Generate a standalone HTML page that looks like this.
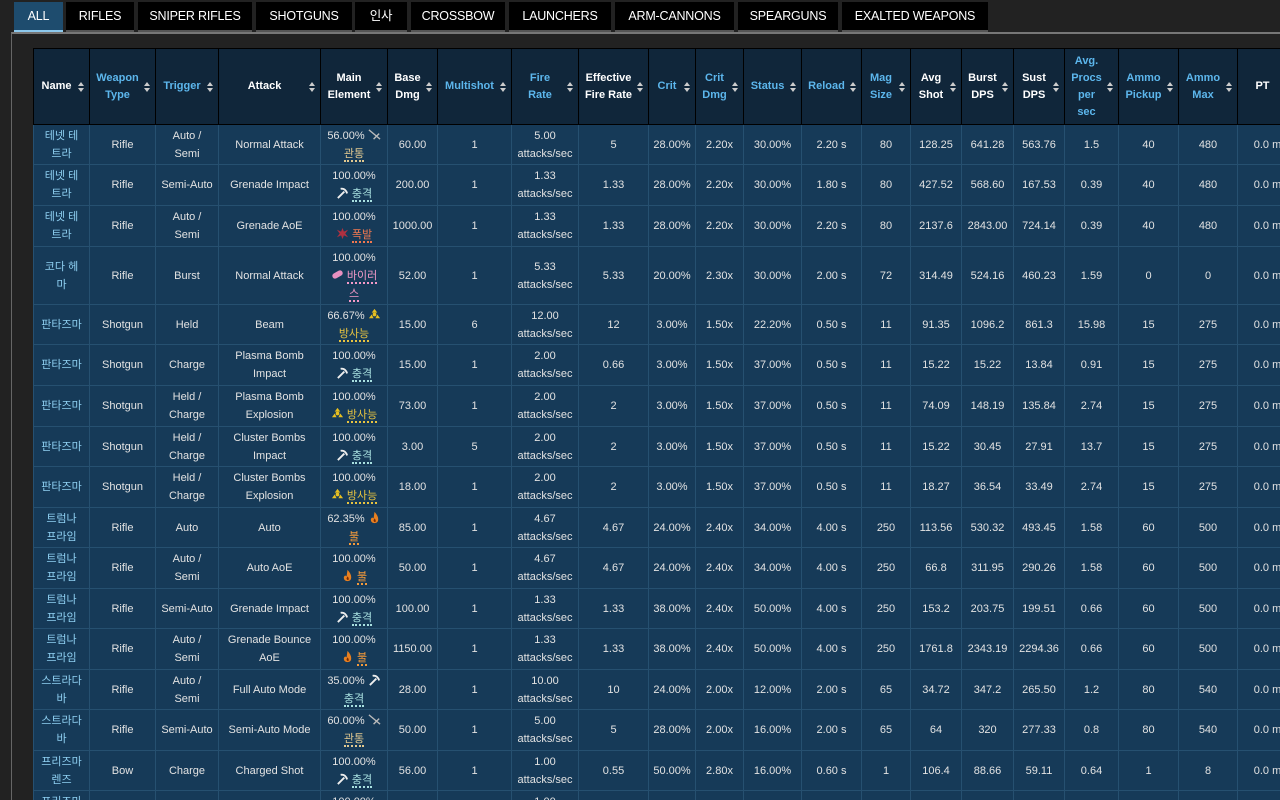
<!DOCTYPE html>
<html><head><meta charset="utf-8">
<style>
html,body{margin:0;padding:0;background:#222;width:1280px;height:800px;overflow:hidden;font-family:"Liberation Sans","Noto Sans CJK KR",sans-serif;}
#wrap{position:relative;width:1280px;height:800px;overflow:hidden;background:#222}
.tab{position:absolute;top:2px;background:#000;color:#fff;font-size:12.5px;height:28px;line-height:28px;text-align:center;border-bottom:2px solid #555;white-space:nowrap;letter-spacing:-0.2px}
.tab.act{background:#1e4c6e;border-bottom:2px solid #8cc8ec}
.panel{position:absolute;top:32px;left:11px;width:1290px;height:800px;border-top:2px solid #777;border-left:1px solid #666;background:#222}
table{position:absolute;top:48px;left:33px;width:1264px;border-collapse:collapse;table-layout:fixed;font-size:11px;}
th{background:#10263a;color:#fff;font-weight:bold;border:1px solid #000;height:75px;padding:0 14px 0 4px;position:relative;line-height:17px;text-align:center}
th.b{color:#5cb6ec}
th svg{position:absolute;right:4px;top:32px}
td{background:#163a58;color:#e2e2e2;border:1px solid #265070;text-align:center;line-height:18px;padding:0 2px;white-space:nowrap;overflow:hidden}
td.n{color:#8fd0f2}
.e{border-bottom:2px dotted;padding-bottom:0}
.imp{color:#a8e0e0}.pun{color:#e0c890}.bla{color:#f07850}.vir{color:#f49ac8}.rad{color:#e8c440}.hea{color:#f59a3a}
i svg{vertical-align:-2px}
i{font-style:normal}
</style></head><body><div id="wrap">
<div class="panel"></div>
<div class="tab act" style="left:14px;width:49px">ALL</div>
<div class="tab" style="left:66px;width:68px">RIFLES</div>
<div class="tab" style="left:138px;width:114px">SNIPER RIFLES</div>
<div class="tab" style="left:256px;width:96px">SHOTGUNS</div>
<div class="tab" style="left:355px;width:52px">인사</div>
<div class="tab" style="left:411px;width:94px">CROSSBOW</div>
<div class="tab" style="left:509px;width:102px">LAUNCHERS</div>
<div class="tab" style="left:615px;width:119px">ARM-CANNONS</div>
<div class="tab" style="left:738px;width:100px">SPEARGUNS</div>
<div class="tab" style="left:842px;width:146px">EXALTED WEAPONS</div>
<svg width="0" height="0" style="position:absolute">
<defs>
<symbol id="s" viewBox="0 0 8 12"><path d="M4 1L7 5H1Z M4 11L7 7H1Z" fill="#ccc"/></symbol>
<symbol id="imp" viewBox="0 0 14 14"><path d="M2 13L9 6 M5 3Q10 2 12 8" stroke="#eee" stroke-width="2" fill="none"/></symbol>
<symbol id="pun" viewBox="0 0 14 14"><path d="M1 2L13 12 M6 12L12 6" stroke="#bbb" stroke-width="1.5" fill="none"/></symbol>
<symbol id="bla" viewBox="0 0 14 14"><path d="M7 1L8.5 5 13 3 10 7 13 11 8.5 9 7 13 5.5 9 1 11 4 7 1 3 5.5 5Z" fill="#b03040"/></symbol>
<symbol id="vir" viewBox="0 0 14 14"><rect x="1" y="4" width="12" height="6" rx="3" transform="rotate(-30 7 7)" fill="#e890c0"/></symbol>
<symbol id="rad" viewBox="0 0 14 14"><circle cx="7" cy="7" r="2" fill="#e8c020"/><path d="M7 1L10 5H4Z M1 11L4 7 6 11Z M13 11L10 7 8 11Z" fill="#e8c020"/></symbol>
<symbol id="hea" viewBox="0 0 14 14"><path d="M7 1Q11 5 11 9 Q11 13 7 13 Q3 13 3 9 Q4 6 6 8Z" fill="#e88020"/><path d="M7 8Q9 10 8 12 Q6 12 6 10Z" fill="#7a2a00"/></symbol>
</defs></svg>
<table>
<colgroup><col style="width:56px"><col style="width:66px"><col style="width:63px"><col style="width:102px"><col style="width:67px"><col style="width:50px"><col style="width:74px"><col style="width:67px"><col style="width:70px"><col style="width:47px"><col style="width:48px"><col style="width:58px"><col style="width:60px"><col style="width:49px"><col style="width:51px"><col style="width:52px"><col style="width:51px"><col style="width:54px"><col style="width:60px"><col style="width:59px"><col style="width:60px"></colgroup>
<tr>
<th>Name<svg width="8" height="12"><use href="#s"/></svg></th>
<th class="b">Weapon Type<svg width="8" height="12"><use href="#s"/></svg></th>
<th class="b">Trigger<svg width="8" height="12"><use href="#s"/></svg></th>
<th>Attack<svg width="8" height="12"><use href="#s"/></svg></th>
<th>Main Element<svg width="8" height="12"><use href="#s"/></svg></th>
<th>Base Dmg<svg width="8" height="12"><use href="#s"/></svg></th>
<th class="b">Multishot<svg width="8" height="12"><use href="#s"/></svg></th>
<th class="b">Fire<br>Rate<svg width="8" height="12"><use href="#s"/></svg></th>
<th>Effective Fire Rate<svg width="8" height="12"><use href="#s"/></svg></th>
<th class="b">Crit<svg width="8" height="12"><use href="#s"/></svg></th>
<th class="b">Crit Dmg<svg width="8" height="12"><use href="#s"/></svg></th>
<th class="b">Status<svg width="8" height="12"><use href="#s"/></svg></th>
<th class="b">Reload<svg width="8" height="12"><use href="#s"/></svg></th>
<th class="b">Mag Size<svg width="8" height="12"><use href="#s"/></svg></th>
<th>Avg Shot<svg width="8" height="12"><use href="#s"/></svg></th>
<th>Burst DPS<svg width="8" height="12"><use href="#s"/></svg></th>
<th>Sust DPS<svg width="8" height="12"><use href="#s"/></svg></th>
<th class="b">Avg. Procs per sec<svg width="8" height="12"><use href="#s"/></svg></th>
<th class="b">Ammo Pickup<svg width="8" height="12"><use href="#s"/></svg></th>
<th class="b">Ammo Max<svg width="8" height="12"><use href="#s"/></svg></th>
<th>PT<svg width="8" height="12"><use href="#s"/></svg></th>
</tr>
<tr style="height:40px"><td class="n">테넷 테<br>트라</td><td>Rifle</td><td>Auto /<br>Semi</td><td>Normal Attack</td><td>56.00% <i><svg width="13" height="13"><use href="#pun"/></svg></i><br><span class="e pun">관통</span></td><td>60.00</td><td>1</td><td>5.00<br>attacks/sec</td><td>5</td><td>28.00%</td><td>2.20x</td><td>30.00%</td><td>2.20 s</td><td>80</td><td>128.25</td><td>641.28</td><td>563.76</td><td>1.5</td><td>40</td><td>480</td><td>0.0 m</td></tr>
<tr style="height:41px"><td class="n">테넷 테<br>트라</td><td>Rifle</td><td>Semi-Auto</td><td>Grenade Impact</td><td>100.00%<br><i><svg width="13" height="13"><use href="#imp"/></svg></i> <span class="e imp">충격</span></td><td>200.00</td><td>1</td><td>1.33<br>attacks/sec</td><td>1.33</td><td>28.00%</td><td>2.20x</td><td>30.00%</td><td>1.80 s</td><td>80</td><td>427.52</td><td>568.60</td><td>167.53</td><td>0.39</td><td>40</td><td>480</td><td>0.0 m</td></tr>
<tr style="height:41px"><td class="n">테넷 테<br>트라</td><td>Rifle</td><td>Auto /<br>Semi</td><td>Grenade AoE</td><td>100.00%<br><i><svg width="13" height="13"><use href="#bla"/></svg></i> <span class="e bla">폭발</span></td><td>1000.00</td><td>1</td><td>1.33<br>attacks/sec</td><td>1.33</td><td>28.00%</td><td>2.20x</td><td>30.00%</td><td>2.20 s</td><td>80</td><td>2137.6</td><td>2843.00</td><td>724.14</td><td>0.39</td><td>40</td><td>480</td><td>0.0 m</td></tr>
<tr style="height:58px"><td class="n">코다 헤<br>마</td><td>Rifle</td><td>Burst</td><td>Normal Attack</td><td>100.00%<br><i><svg width="13" height="13"><use href="#vir"/></svg></i> <span class="e vir">바이러</span><br><span class="e vir">스</span></td><td>52.00</td><td>1</td><td>5.33<br>attacks/sec</td><td>5.33</td><td>20.00%</td><td>2.30x</td><td>30.00%</td><td>2.00 s</td><td>72</td><td>314.49</td><td>524.16</td><td>460.23</td><td>1.59</td><td>0</td><td>0</td><td>0.0 m</td></tr>
<tr style="height:40px"><td class="n">판타즈마</td><td>Shotgun</td><td>Held</td><td>Beam</td><td>66.67% <i><svg width="13" height="13"><use href="#rad"/></svg></i><br><span class="e rad">방사능</span></td><td>15.00</td><td>6</td><td>12.00<br>attacks/sec</td><td>12</td><td>3.00%</td><td>1.50x</td><td>22.20%</td><td>0.50 s</td><td>11</td><td>91.35</td><td>1096.2</td><td>861.3</td><td>15.98</td><td>15</td><td>275</td><td>0.0 m</td></tr>
<tr style="height:41px"><td class="n">판타즈마</td><td>Shotgun</td><td>Charge</td><td>Plasma Bomb<br>Impact</td><td>100.00%<br><i><svg width="13" height="13"><use href="#imp"/></svg></i> <span class="e imp">충격</span></td><td>15.00</td><td>1</td><td>2.00<br>attacks/sec</td><td>0.66</td><td>3.00%</td><td>1.50x</td><td>37.00%</td><td>0.50 s</td><td>11</td><td>15.22</td><td>15.22</td><td>13.84</td><td>0.91</td><td>15</td><td>275</td><td>0.0 m</td></tr>
<tr style="height:41px"><td class="n">판타즈마</td><td>Shotgun</td><td>Held /<br>Charge</td><td>Plasma Bomb<br>Explosion</td><td>100.00%<br><i><svg width="13" height="13"><use href="#rad"/></svg></i> <span class="e rad">방사능</span></td><td>73.00</td><td>1</td><td>2.00<br>attacks/sec</td><td>2</td><td>3.00%</td><td>1.50x</td><td>37.00%</td><td>0.50 s</td><td>11</td><td>74.09</td><td>148.19</td><td>135.84</td><td>2.74</td><td>15</td><td>275</td><td>0.0 m</td></tr>
<tr style="height:40px"><td class="n">판타즈마</td><td>Shotgun</td><td>Held /<br>Charge</td><td>Cluster Bombs<br>Impact</td><td>100.00%<br><i><svg width="13" height="13"><use href="#imp"/></svg></i> <span class="e imp">충격</span></td><td>3.00</td><td>5</td><td>2.00<br>attacks/sec</td><td>2</td><td>3.00%</td><td>1.50x</td><td>37.00%</td><td>0.50 s</td><td>11</td><td>15.22</td><td>30.45</td><td>27.91</td><td>13.7</td><td>15</td><td>275</td><td>0.0 m</td></tr>
<tr style="height:41px"><td class="n">판타즈마</td><td>Shotgun</td><td>Held /<br>Charge</td><td>Cluster Bombs<br>Explosion</td><td>100.00%<br><i><svg width="13" height="13"><use href="#rad"/></svg></i> <span class="e rad">방사능</span></td><td>18.00</td><td>1</td><td>2.00<br>attacks/sec</td><td>2</td><td>3.00%</td><td>1.50x</td><td>37.00%</td><td>0.50 s</td><td>11</td><td>18.27</td><td>36.54</td><td>33.49</td><td>2.74</td><td>15</td><td>275</td><td>0.0 m</td></tr>
<tr style="height:40px"><td class="n">트럼나<br>프라임</td><td>Rifle</td><td>Auto</td><td>Auto</td><td>62.35% <i><svg width="13" height="13"><use href="#hea"/></svg></i><br><span class="e hea">불</span></td><td>85.00</td><td>1</td><td>4.67<br>attacks/sec</td><td>4.67</td><td>24.00%</td><td>2.40x</td><td>34.00%</td><td>4.00 s</td><td>250</td><td>113.56</td><td>530.32</td><td>493.45</td><td>1.58</td><td>60</td><td>500</td><td>0.0 m</td></tr>
<tr style="height:41px"><td class="n">트럼나<br>프라임</td><td>Rifle</td><td>Auto /<br>Semi</td><td>Auto AoE</td><td>100.00%<br><i><svg width="13" height="13"><use href="#hea"/></svg></i> <span class="e hea">불</span></td><td>50.00</td><td>1</td><td>4.67<br>attacks/sec</td><td>4.67</td><td>24.00%</td><td>2.40x</td><td>34.00%</td><td>4.00 s</td><td>250</td><td>66.8</td><td>311.95</td><td>290.26</td><td>1.58</td><td>60</td><td>500</td><td>0.0 m</td></tr>
<tr style="height:40px"><td class="n">트럼나<br>프라임</td><td>Rifle</td><td>Semi-Auto</td><td>Grenade Impact</td><td>100.00%<br><i><svg width="13" height="13"><use href="#imp"/></svg></i> <span class="e imp">충격</span></td><td>100.00</td><td>1</td><td>1.33<br>attacks/sec</td><td>1.33</td><td>38.00%</td><td>2.40x</td><td>50.00%</td><td>4.00 s</td><td>250</td><td>153.2</td><td>203.75</td><td>199.51</td><td>0.66</td><td>60</td><td>500</td><td>0.0 m</td></tr>
<tr style="height:41px"><td class="n">트럼나<br>프라임</td><td>Rifle</td><td>Auto /<br>Semi</td><td>Grenade Bounce<br>AoE</td><td>100.00%<br><i><svg width="13" height="13"><use href="#hea"/></svg></i> <span class="e hea">불</span></td><td>1150.00</td><td>1</td><td>1.33<br>attacks/sec</td><td>1.33</td><td>38.00%</td><td>2.40x</td><td>50.00%</td><td>4.00 s</td><td>250</td><td>1761.8</td><td>2343.19</td><td>2294.36</td><td>0.66</td><td>60</td><td>500</td><td>0.0 m</td></tr>
<tr style="height:40px"><td class="n">스트라다<br>바</td><td>Rifle</td><td>Auto /<br>Semi</td><td>Full Auto Mode</td><td>35.00% <i><svg width="13" height="13"><use href="#imp"/></svg></i><br><span class="e imp">충격</span></td><td>28.00</td><td>1</td><td>10.00<br>attacks/sec</td><td>10</td><td>24.00%</td><td>2.00x</td><td>12.00%</td><td>2.00 s</td><td>65</td><td>34.72</td><td>347.2</td><td>265.50</td><td>1.2</td><td>80</td><td>540</td><td>0.0 m</td></tr>
<tr style="height:41px"><td class="n">스트라다<br>바</td><td>Rifle</td><td>Semi-Auto</td><td>Semi-Auto Mode</td><td>60.00% <i><svg width="13" height="13"><use href="#pun"/></svg></i><br><span class="e pun">관통</span></td><td>50.00</td><td>1</td><td>5.00<br>attacks/sec</td><td>5</td><td>28.00%</td><td>2.00x</td><td>16.00%</td><td>2.00 s</td><td>65</td><td>64</td><td>320</td><td>277.33</td><td>0.8</td><td>80</td><td>540</td><td>0.0 m</td></tr>
<tr style="height:40px"><td class="n">프리즈마<br>렌즈</td><td>Bow</td><td>Charge</td><td>Charged Shot</td><td>100.00%<br><i><svg width="13" height="13"><use href="#imp"/></svg></i> <span class="e imp">충격</span></td><td>56.00</td><td>1</td><td>1.00<br>attacks/sec</td><td>0.55</td><td>50.00%</td><td>2.80x</td><td>16.00%</td><td>0.60 s</td><td>1</td><td>106.4</td><td>88.66</td><td>59.11</td><td>0.64</td><td>1</td><td>8</td><td>0.0 m</td></tr>
<tr style="height:41px"><td class="n">프리즈마<br>렌즈</td><td>Bow</td><td>Charge</td><td>Charged Shot</td><td>100.00%<br><i><svg width="13" height="13"><use href="#imp"/></svg></i> <span class="e imp">충격</span></td><td>56.00</td><td>1</td><td>1.00<br>attacks/sec</td><td>0.55</td><td>50.00%</td><td>2.80x</td><td>16.00%</td><td>0.60 s</td><td>1</td><td>106.4</td><td>88.66</td><td>59.11</td><td>0.64</td><td>1</td><td>8</td><td>0.0 m</td></tr>
</table>
</div></body></html>
